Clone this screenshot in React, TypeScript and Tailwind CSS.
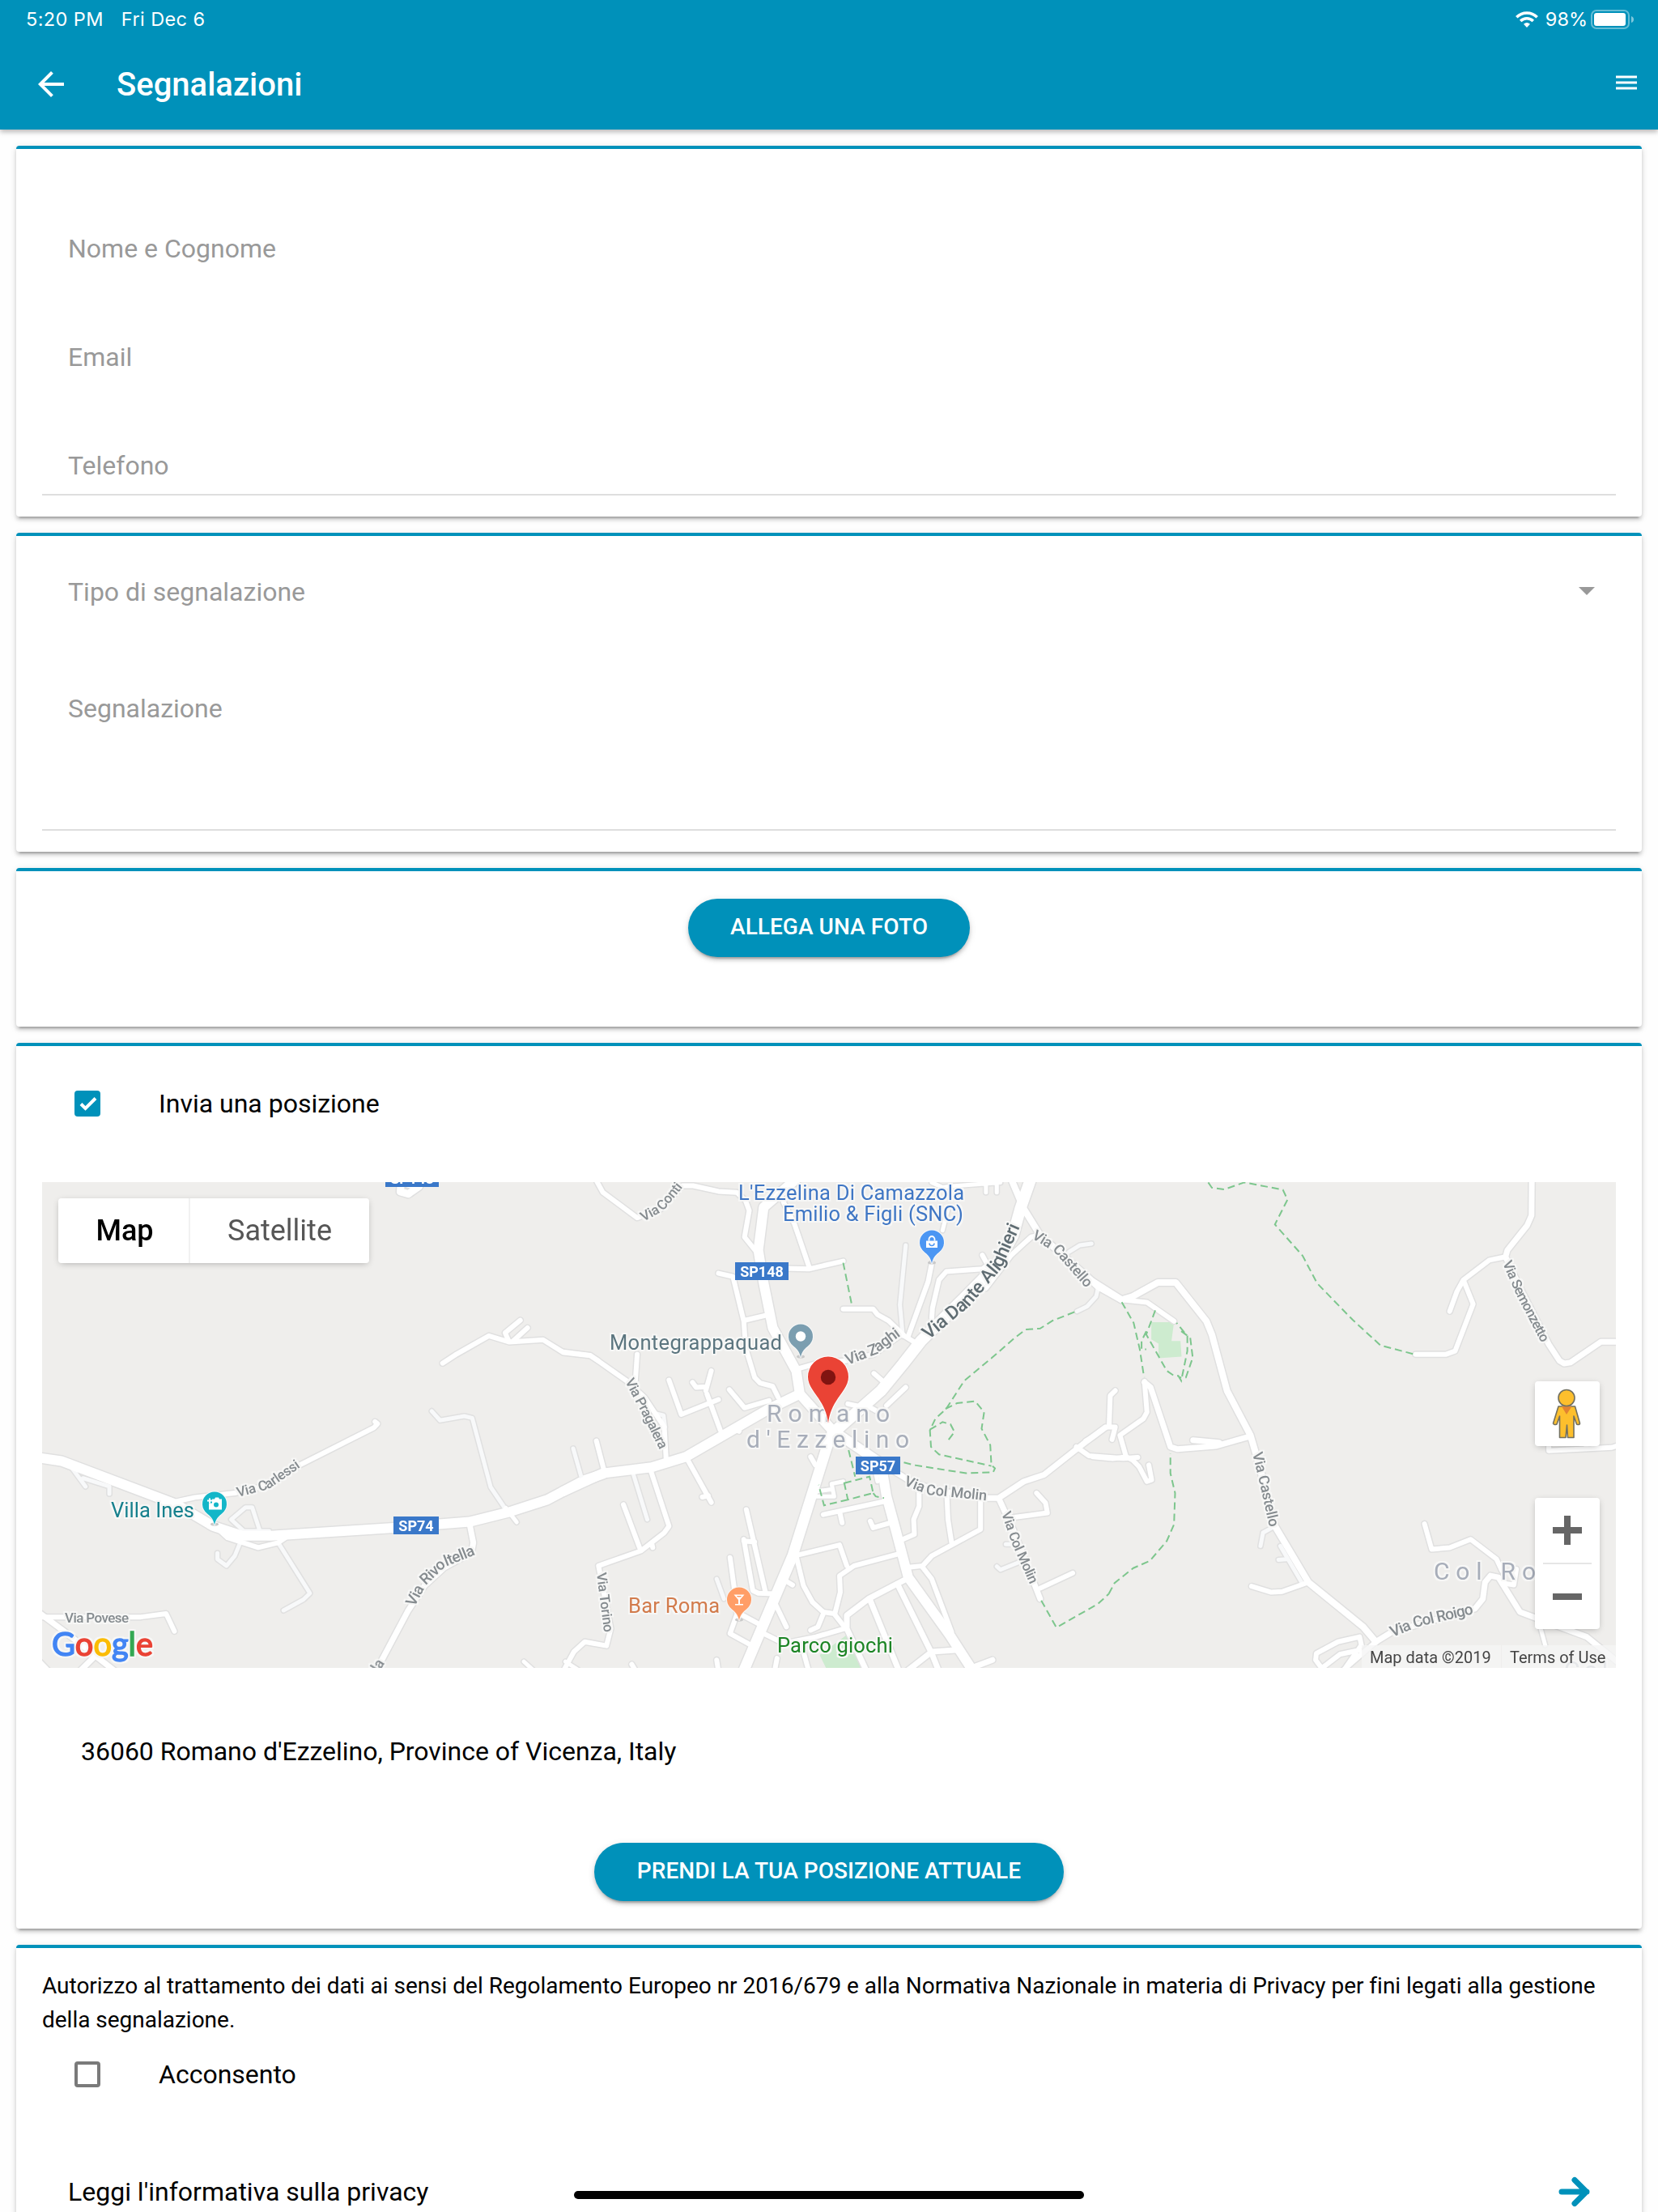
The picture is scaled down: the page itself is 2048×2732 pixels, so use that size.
import type { ReactNode } from "react";

type Road = { d: string; w: number; minor?: boolean };
type Tile = { transform: string; roads: Road[]; paths: string[]; parks: string[] };

// Each tile keeps its own coordinates, the transform puts it on the map canvas
const tiles: Tile[] = [
  {
    transform: "translate(-12 -20) scale(0.44643 0.40816)",
    parks: [],
    paths: [],
    roads: [
      { w: 5, minor: true, d: "M110 915L147 970M140 945L213 970L213 992" },
      { w: 5, minor: true, d: "M550 1070L590 1033L608 1033L628 1100M550 1070L585 1105L655 1105" },
      { w: 5, minor: true, d: "M575 1140L560 1180L537 1210L512 1190L512 1172" },
      { w: 5, minor: true, d: "M683 1145L768 1293L750 1312L695 1345" },
      { w: 5, minor: true, d: "M1105 742L1128 770L1195 757L1217 763L1268 972L1310 1040" },
      { w: 5, d: "M1310 1035L1340 1078" },
      { w: 6, d: "M400 1015L450 1003L560 990L655 965L740 905L945 792L955 780L948 774" },
      { w: 6, d: "M1135 597L1170 572L1263 514L1320 533L1413 526L1470 565L1543 574L1566 590" },
      { w: 6, d: "M1350 467L1308 505L1318 530M1370 490L1330 530" },
      { w: 6, d: "M520 1105L540 1125L625 1155L680 1140L700 1125" },
      { w: 7, d: "M1210 1085L1220 1140L1215 1170L1140 1215L1085 1270L1040 1345L950 1530" },
      { w: 6, d: "M30 1365L300 1365L370 1355L393 1408" },
      { w: 7, d: "M10 1345L90 1410L230 1530M10 1490L45 1530M130 1530L172 1485" },
      { w: 5, d: "M1360 1500L1390 1530M1475 1500L1510 1525" },
      { w: 9, d: "M1020 50L1018 78L1040 85L1070 62L1040 55" },
      { w: 12, d: "M0 880L80 893L400 1025L500 1090L580 1119L660 1119L1000 1095L1210 1077L1320 1047L1425 1010L1525 952L1580 932" },
    ],
  },
  {
    transform: "translate(648 -20) scale(0.44643 0.40816)",
    parks: ["M700 1480L780 1415L815 1525L720 1525Z"],
    paths: [
      "M765 293L790 427",
      "M1405 442L1345 468L1310 492L1270 495L1240 520L1175 582L1100 650L1050 735L1020 765L1005 800L1008 850L1030 873L1175 908",
      "M1048 735L1080 718L1130 712L1155 745L1148 795L1172 845L1175 905L1185 915L1180 927L1105 930L960 905L925 895L860 880",
      "M1005 798L1040 775L1062 782L1073 805L1050 838",
      "M780 860L798 940M768 960L838 940L848 990L778 1010ZM848 990L855 1000L878 1005M778 1010L712 1027L697 965",
      "M1313 1315L1355 1397L1470 1325L1500 1295",
    ],
    roads: [
      { w: 5, minor: true, d: "M185 935L223 1070M18 855L40 940M250 750L268 755L272 790M415 1250L435 1310" },
      { w: 5, minor: true, d: "M938 240L922 420L930 515M1390 260L1420 240L1452 235M1470 370L1465 395L1440 425L1412 440" },
      { w: 5, minor: true, d: "M1215 1145L1240 1145M1190 1212L1200 1222L1250 1200" },
      { w: 6, d: "M80 40L100 80L195 157L260 130L320 60L350 60L420 77L470 80L495 105L505 135L492 215L525 260" },
      { w: 6, d: "M-10 563L65 573L165 650L215 700L270 790L275 885M195 570L190 650M82 832L103 920" },
      { w: 6, d: "M-10 1530L20 1470L50 1440L110 1452L122 1400L88 1210L205 1165L270 1110L283 1090L232 920M157 1025L205 1165M236 1145L238 1155" },
      { w: 6, d: "M330 880L400 1018M375 1002L392 998" },
      { w: 6, d: "M283 648L317 752L420 707M425 800L388 690M400 620L385 680M348 655L358 670L385 668" },
      { w: 6, d: "M450 677L492 732L560 710M462 795L477 803" },
      { w: 6, d: "M420 325L460 335L490 470L495 550L520 640L535 657L570 667L585 700M490 468L560 450" },
      { w: 6, d: "M600 110L630 175L672 310M600 310L670 312L765 288" },
      { w: 6, d: "M765 433L848 433L860 450L890 468L935 515L965 535M945 515L1000 350L1010 295" },
      { w: 6, d: "M1010 460L1012 430L1030 345L1050 320L1150 312L1165 300L1150 270" },
      { w: 5, d: "M1010 50L1040 65L1060 62L1200 50M1160 55L1160 80M1190 55L1190 80M1040 195L1055 130" },
      { w: 6, d: "M1160 370L1230 270L1285 215L1310 210" },
      { w: 6, d: "M635 615L700 595L770 590L850 570L920 515" },
      { w: 6, d: "M850 628L878 655M938 670L885 725M830 725L855 740M778 720L820 730M675 880L688 905" },
      { w: 5, d: "M675 1000L740 1000L733 962L765 955M690 985L735 978M855 930L860 955" },
      { w: 6, d: "M710 1055L880 1015M755 1045L762 1080M840 1075L848 1095L895 1080" },
      { w: 6, d: "M975 970L975 1030L960 1070L962 1115L930 1130M1052 1000L1055 1070L1065 1140" },
      { w: 6, d: "M1145 1010L1145 1100L1010 1180L985 1210L940 1215M985 1215L1010 1250L1065 1410" },
      { w: 6, d: "M630 1180L755 1147L775 1210M915 1175L795 1210L755 1240L757 1290L742 1355" },
      { w: 6, d: "M635 1180L655 1270L680 1320L710 1350L740 1355L772 1400M710 1355L695 1395L675 1405" },
      { w: 7, d: "M940 1250L835 1310L775 1360L775 1400L830 1530M838 1310L920 1530" },
      { w: 7, d: "M915 1265L1010 1475L1030 1530M1010 1470L1075 1465M1010 1470L940 1530M1130 1515L1178 1495" },
      { w: 6, d: "M497 1040L550 1290M490 1130L515 1285L530 1293L575 1295M490 1135L520 1138M452 1185L465 1290" },
      { w: 6, d: "M605 1255L625 1268M575 1320L608 1395M470 1350L530 1385M470 1360L452 1415L510 1450" },
      { w: 6, d: "M545 1415L600 1445L690 1425L775 1398M655 1470L670 1530M582 1490L575 1530M415 1495L420 1530M180 1508L192 1530" },
      { w: 6, d: "M1300 990L1325 1020L1330 1050L1225 1065M1310 1278L1400 1232" },
      { w: 6, d: "M1410 850L1445 877L1540 885L1580 882" },
      { w: 7, d: "M870 900L960 960L1040 985L1165 1005L1195 1005L1265 955L1320 935L1440 832L1490 792M1195 1005L1235 1100L1310 1310" },
      { w: 8, d: "M1230 40L1265 130L1310 210L1440 335L1470 365L1535 405" },
      { w: 12, d: "M-10 985L50 955L100 930L235 912L330 880L425 820L560 735L645 690" },
      { w: 12, d: "M635 40L545 125L530 255L545 355L570 490L635 620L645 690L735 800" },
      { w: 14, d: "M1287 30L1255 130L1235 210L1190 300L1100 400L980 530L930 600L870 680L735 810" },
      { w: 13, d: "M735 810L720 850L625 1180L485 1540" },
      { w: 12, d: "M735 800L870 900L885 1000L910 1100L945 1245L1060 1420L1125 1530" },
    ],
  },
  {
    transform: "translate(1298 -20) scale(0.44516 0.40816)",
    parks: ["M162 473L225 473L218 530L243 530L246 577L182 582L182 538L162 525Z"],
    paths: [
      "M320 50L330 66L365 71L420 50L527 72L540 102L505 177L582 272L622 355L720 465L798 543L892 570",
      "M80 412L113 475L130 555L142 640",
      "M173 437L148 510L205 620L225 635L237 635L245 650L262 560L262 515L232 475",
      "M245 500L270 520L277 580L258 640L240 640",
      "M148 500L135 530L135 555L148 555",
      "M44 1295L60 1262L112 1217L158 1195L205 1135L225 1085L228 990L215 930L215 870",
    ],
    roads: [
      { w: 5, minor: true, d: "M472 1110L465 1150M505 1090L472 1110M515 1192L537 1190M520 1150L580 1262" },
      { w: 6, d: "M62 680L48 695L45 785M-20 832L0 820L35 790L62 790L53 828" },
      { w: 6, d: "M80 405L150 413L225 470" },
      { w: 6, d: "M0 880L55 886L92 880L110 890L128 910L150 955L163 950L155 905M92 880L75 815L140 765L150 745L143 652" },
      { w: 7, d: "M143 655L160 670L215 850L235 857L340 848L437 818M278 830L350 837" },
      { w: 6, d: "M440 1272L495 1290L525 1288L598 1260" },
      { w: 6, d: "M785 1440L690 1530M740 1465L685 1478L635 1520L618 1495L620 1475L680 1440L740 1425L745 1450L700 1520" },
      { w: 5, d: "M1240 1390L1255 1450M1365 840L1372 855" },
      { w: 6, d: "M920 1083L940 1160L990 1155L1048 1130L1120 1190L1135 1225M1175 1220L1168 1268L1135 1262" },
      { w: 6, d: "M1145 275L1100 285L1028 345L1010 380L990 440M1028 345L1055 418L1005 560L980 570L895 570" },
      { w: 6, d: "M1265 845L1265 862L1440 852L1470 842" },
      { w: 7, d: "M1218 30L1217 150L1205 180L1150 255L1145 275L1190 380L1265 540L1295 590L1308 598L1325 595L1410 532L1470 532" },
      { w: 7, d: "M785 1440L830 1410L1060 1340L1082 1310L1088 1260L1103 1240L1125 1245L1185 1350L1370 1425L1460 1505" },
      { w: 8, d: "M0 350L80 405L110 395L180 353L230 353L315 470L330 510L372 680L437 815L460 900L505 1090L598 1260L750 1395L785 1440" },
    ],
  },
];

const streets = [
  { id: "carlessi", text: "Via Carlessi", size: 17, len: 87, d: "M242 389L280 379L322 350" },
  { id: "rivoltella", text: "Via Rivoltella", size: 19, len: 104, d: "M460 525L474 498L498 475L538 459" },
  { id: "conti", text: "Via Conti", size: 17, len: 66, d: "M743 49L768 35L794 3" },
  { id: "castello-n", text: "Via Castello", size: 18, len: 93, d: "M1222 69L1250 86L1294 136" },
  { id: "zaghi", text: "Via Zaghi", size: 19, len: 76, d: "M995 226L1029 213L1064 187" },
  { id: "pragalera", text: "Via Pragalera", size: 17, len: 95, d: "M720 246L740 284L765 335" },
  { id: "torino", text: "Via Torino", size: 17, len: 74, d: "M685 483L695 562" },
  { id: "molin", text: "Via Col Molin", size: 18, len: 105, d: "M1064 374L1095 386L1174 394" },
  { id: "molin-s", text: "Via Col Molin", size: 17, len: 95, d: "M1185 409L1198 447L1224 505" },
  { id: "semonzetto", text: "Via Semonzetto", size: 17, len: 110, d: "M1804 100L1821 139L1856 206" },
  { id: "castello-s", text: "Via Castello", size: 18, len: 94, d: "M1495 335L1504 372L1518 435" },
  { id: "roigo", text: "Via Col Roigo", size: 19, len: 105, d: "M1668 562L1700 549L1773 532" },
];

const shields = [
  { text: "SP148", x: 424, y: -16, w: 66 },
  { text: "SP148", x: 856, y: 99, w: 66 },
  { text: "SP57", x: 1005, y: 339, w: 55 },
  { text: "SP74", x: 434, y: 413, w: 56 },
];

const Poi = ({ x, y, color, children }: { x: number; y: number; color: string; children: ReactNode }) => (
  <g transform={`translate(${x} ${y})`}>
    <ellipse cx="0" cy="25" rx="5" ry="2" fill="#c9c9c9" />
    <path
      d="M0 26C-1.500 18 -5 15.500 -9.500 11.500A15 15 0 1 1 9.500 11.500C5 15.500 1.500 18 0 26Z"
      fill={color}
      stroke="#f8f8f8"
      strokeWidth="2"
      paintOrder="stroke"
    />
    {children}
  </g>
);

const MapCanvas = () => (
  <svg viewBox="0 0 1944 600" className="block h-[600px] w-[1944px]" fontFamily="Roboto, sans-serif">
    <defs>
      <filter id="halo" filterUnits="userSpaceOnUse" x="0" y="0" width="1944" height="600" colorInterpolationFilters="sRGB">
        <feMorphology in="SourceAlpha" operator="dilate" radius="2" result="grown" />
        <feFlood floodColor="#f7f7f6" />
        <feComposite in2="grown" operator="in" />
        <feMerge>
          <feMergeNode />
          <feMergeNode in="SourceGraphic" />
        </feMerge>
      </filter>
    </defs>
    <rect width="1944" height="600" fill="#efeeec" />
    {tiles.map((t) => (
      <g key={t.transform} transform={t.transform}>
        {t.parks.map((d) => (
          <path key={d} d={d} fill="#cdebcf" />
        ))}
      </g>
    ))}
    <g fill="none" strokeLinecap="round" strokeLinejoin="round">
      {tiles.map((t) => (
        <g key={t.transform} transform={t.transform} stroke="#e0e0e0">
          {t.roads.map((r) => (
            <path key={r.d} d={r.d} strokeWidth={r.w + 3} vectorEffect="non-scaling-stroke" />
          ))}
        </g>
      ))}
      {tiles.map((t) => (
        <g key={t.transform} transform={t.transform}>
          {t.roads.map((r) => (
            <path
              key={r.d}
              d={r.d}
              stroke={r.minor ? "#f8f9fa" : "#ffffff"}
              strokeWidth={r.w}
              vectorEffect="non-scaling-stroke"
            />
          ))}
        </g>
      ))}
    </g>
    <g fill="none" stroke="#7dc68d" strokeWidth="2" strokeDasharray="9 5">
      {tiles.map((t) => (
        <g key={t.transform} transform={t.transform}>
          {t.paths.map((d) => (
            <path key={d} d={d} vectorEffect="non-scaling-stroke" />
          ))}
        </g>
      ))}
    </g>

    <g fill="#858b8f" filter="url(#halo)" fontWeight="500">
      {streets.map((s) => (
        <g key={s.id}>
          <path id={s.id} d={s.d} fill="none" />
          <text fontSize={s.size}>
            <textPath href={`#${s.id}`} textLength={s.len}>
              {s.text}
            </textPath>
          </text>
        </g>
      ))}
      <text x="28" y="544" fontSize="17" textLength="79">Via Povese</text>
      <text x="0" y="0" fontSize="18" transform="translate(416 606) rotate(-58)">la</text>
      <path id="dante" d="M1095 195L1146 153L1185 107L1212 46" fill="none" />
      <text fontSize="23" fill="#5f6c72">
        <textPath href="#dante" textLength="183">Via Dante Alighieri</textPath>
      </text>
    </g>

    {shields.map((s) => (
      <g key={`${s.x}-${s.y}`}>
        <rect x={s.x} y={s.y} width={s.w} height="22" fill="#3a78c9" />
        <text x={s.x + s.w / 2} y={s.y + 17.5} textAnchor="middle" fontSize="18" fontWeight="700" fill="#fff">
          {s.text}
        </text>
      </g>
    ))}

    <g filter="url(#halo)" fontSize="25.500">
      <text x="85" y="413.500" fill="#16808d" textLength="103">Villa Ines</text>
      <text x="860" y="22" fill="#3f76c4" textLength="279">L'Ezzelina Di Camazzola</text>
      <text x="915" y="48" fill="#3f76c4" textLength="223">Emilio &amp; Figli (SNC)</text>
      <text x="701" y="207" fill="#5b757f" textLength="213">Montegrappaquad</text>
      <text x="724" y="532" fill="#d27b4c" textLength="113">Bar Roma</text>
      <text x="908" y="581" fill="#1b8424" textLength="143">Parco giochi</text>
      <g fontSize="30" fill="#a7adb9">
        <text x="895" y="295.500" textLength="152">Romano</text>
        <text x="870" y="328" textLength="201">d'Ezzelino</text>
        <text x="1719" y="491" textLength="126">Col Ro</text>
        <text x="1880" y="613" letterSpacing="5">Col</text>
      </g>
    </g>

    <Poi x={213} y={397.5} color="#14b6c8">
      <path d="M-1 -6H0L1 -8H5L6 -6H9V7H-7V-1H-3V-6Z" fill="#fff" />
      <circle cx="2" cy="1" r="3" fill="#14b6c8" />
      <path d="M-6 -7V-1M-9 -4H-3" stroke="#fff" strokeWidth="2" />
    </Poi>
    <Poi x={1099} y={74.5} color="#4b96f3">
      <path d="M-7 -2H7V6.500H-7Z" fill="#fff" />
      <path d="M-3.500 -2V-4A3.500 3.500 0 0 1 3.500 -4V-2" fill="none" stroke="#fff" strokeWidth="1.800" />
      <path d="M-3 1A3 3 0 0 0 3 1" fill="none" stroke="#4b96f3" strokeWidth="1.500" />
    </Poi>
    <Poi x={937} y={190.5} color="#7b9eb0">
      <circle r="6.200" fill="#fff" />
    </Poi>
    <Poi x={861} y={515.5} color="#ff9e67">
      <path d="M-6.500 -6H6.500L1 0.500V5.500H5V7H-5V5.500H-1V0.500ZM-3.200 -4.500L-1.800 -3H1.800L3.200 -4.500Z" fill="#fff" fillRule="evenodd" />
    </Poi>

    <path
      d="M971 298C969.500 285 965 276 959 267C952 257 946 250 946 240.500A25 25 0 0 1 996 240.500C996 250 990 257 983 267C977 276 972.500 285 971 298Z"
      fill="#ea4335"
      stroke="#fff"
      strokeWidth="2"
      paintOrder="stroke"
    />
    <circle cx="971" cy="241" r="9.200" fill="#811411" />

    <g fontFamily="Lato, sans-serif" fontSize="41" filter="url(#halo)" strokeWidth="1.500">
      <text x="12" y="585" textLength="125" lengthAdjust="spacingAndGlyphs">
        <tspan fill="#4285f4" stroke="#4285f4">G</tspan>
        <tspan fill="#ea4335" stroke="#ea4335">o</tspan>
        <tspan fill="#fbbc05" stroke="#fbbc05">o</tspan>
        <tspan fill="#4285f4" stroke="#4285f4">g</tspan>
        <tspan fill="#34a853" stroke="#34a853">l</tspan>
        <tspan fill="#ea4335" stroke="#ea4335">e</tspan>
      </text>
    </g>
  </svg>
);

const controlShadow = "shadow-[0_2px_8px_-2px_rgba(0,0,0,0.3)]";

const LocationMap = () => (
  <div className="relative h-[600px] w-[1944px] overflow-hidden">
    <MapCanvas />
    <div className={`absolute left-5 top-5 flex h-20 rounded bg-white text-4xl ${controlShadow}`}>
      <div className="flex w-[163px] items-center justify-center border-r-2 border-[#f1f1f1] pl-[3px] font-medium text-black">
        Map
      </div>
      <div className="flex w-[221px] items-center justify-center text-[#565656]">Satellite</div>
    </div>

    <div className={`absolute right-5 top-[246px] h-20 w-20 rounded bg-white ${controlShadow}`}>
      <svg viewBox="0 0 80 80" className="h-20 w-20">
        <path
          d="M29 31H49.500L55.500 52Q55 54.500 51.500 53L48 43V69.500H40.500L39.500 54L38 69.500H30.500V43L27 53Q23.500 54.500 22.500 52Z"
          fill="#fdbf2d"
          stroke="#73705f"
          strokeWidth="1.600"
          strokeLinejoin="round"
        />
        <path d="M33 31H45.500L39 41Z" fill="#e28332" />
        <circle cx="39" cy="20.500" r="10" fill="#fdbf2d" stroke="#73705f" strokeWidth="1.600" />
      </svg>
    </div>

    <div className={`absolute right-5 top-[390px] flex h-[162px] w-20 flex-col items-center rounded bg-white ${controlShadow}`}>
      <svg viewBox="0 0 80 80" className="h-20 w-20">
        <path d="M22 40H58M40 22V58" stroke="#666" strokeWidth="8" />
      </svg>
      <div className="h-[2px] w-[60px] bg-[#e6e6e6]" />
      <svg viewBox="0 0 80 80" className="h-20 w-20">
        <path d="M22 40H58" stroke="#666" strokeWidth="8" />
      </svg>
    </div>

    <div className="absolute bottom-0 right-0 flex h-7 gap-px text-[20px] leading-[30px] text-[#444]">
      <div className="w-[172px] whitespace-nowrap bg-[#f5f5f5]/80 pl-[10px]">Map data ©2019</div>
      <div className="w-[141px] whitespace-nowrap bg-[#f5f5f5]/80 pl-[10px]">Terms of Use</div>
    </div>
  </div>
);

const Card = ({ className, children }: { className: string; children: ReactNode }) => (
  <section
    className={`rounded border-t-4 border-[#0091ba] bg-white px-8 shadow-[0_4px_4px_0_rgba(0,0,0,0.14),0_6px_2px_-4px_rgba(0,0,0,0.2),0_2px_10px_0_rgba(0,0,0,0.12)] ${className}`}
  >
    {children}
  </section>
);

const PillButton = ({ className, children }: { className: string; children: ReactNode }) => (
  <button
    className={`block h-[72px] rounded-full bg-[#0091ba] pb-[3px] text-[28px] font-medium tracking-[0.05px] text-white shadow-[0_4px_4px_0_rgba(0,0,0,0.14),0_6px_2px_-4px_rgba(0,0,0,0.2),0_2px_10px_0_rgba(0,0,0,0.12)] ${className}`}
  >
    {children}
  </button>
);

const Header = () => (
  <header className="relative h-[160px] bg-[#0091ba] text-white shadow-[0_3px_6px_rgba(0,0,0,0.28)]">
    <div className="flex h-12 items-center justify-between pl-8 pr-[30px] font-['Inter'] text-[23.5px]">
      <div className="flex gap-[22px] tracking-[0.4px]">
        <span>5:20 PM</span>
        <span>Fri Dec 6</span>
      </div>
      <div className="flex items-center">
        <svg viewBox="0 0 28 20" className="mr-[9px] h-5 w-7" fill="none" stroke="#fff" strokeWidth="3.600">
          <path d="M1.300 7.300C8.500 0.200 19.500 0.200 26.700 7.300" />
          <path d="M6.200 12C10.700 7.700 17.300 7.700 21.800 12" />
          <path d="M10 15.800Q14 12.400 18 15.800L14 20Z" fill="#fff" stroke="none" />
        </svg>
        <span className="mr-1">98%</span>
        <svg viewBox="0 0 53 24" className="h-6 w-[53px]">
          <rect x="1" y="1" width="46" height="22" rx="6" fill="none" stroke="#fff" strokeOpacity="0.4" strokeWidth="2" />
          <rect x="4" y="4" width="39" height="16" rx="3" fill="#fff" />
          <path d="M50 8Q53 9 53 12T50 16Z" fill="#fff" fillOpacity="0.5" />
        </svg>
      </div>
    </div>
    <div className="flex h-28 items-center pl-[39px] pr-[26px]">
      <svg viewBox="0 0 24 24" className="h-12 w-12" fill="#fff">
        <path d="M20 11H7.830l5.590-5.590L12 4l-8 8 8 8 1.410-1.410L7.830 13H20z" />
      </svg>
      <h1 className="ml-[57px] pt-[2px] text-[40px] font-medium">Segnalazioni</h1>
      <svg viewBox="0 0 26 18" className="ml-auto h-[18px] w-[26px] -translate-y-[2px]">
        <path d="M0 2H26M0 9H26M0 16H26" stroke="#fff" strokeWidth="3" />
      </svg>
    </div>
  </header>
);

const App = () => (
  <div className="relative h-[2732px] w-[2048px] overflow-hidden bg-[#fefefe] font-['Roboto',sans-serif] text-[32px] leading-10 text-black">
    <Header />

    <main className="flex flex-col gap-5 p-5">
      <Card className="h-[458px] pt-[26px] text-[#999]">
        <div className="flex h-[134px] items-end pb-[17px] pl-8">Nome e Cognome</div>
        <div className="flex h-[134px] items-end pb-[17px] pl-8">Email</div>
        <div className="flex h-[134px] items-end border-b-2 border-[#dedede] pb-[15px] pl-8">Telefono</div>
      </Card>

      <Card className="h-[394px] text-[#999]">
        <div className="flex h-[138px] items-center justify-between pl-8 pr-[26px]">
          <span>Tipo di segnalazione</span>
          <svg viewBox="0 0 20 10" className="h-[10px] w-5 -translate-y-px">
            <path d="M0 0H20L10 10Z" fill="#999" />
          </svg>
        </div>
        <div className="h-[226px] border-b-2 border-[#dedede] pl-8 pt-[55px]">Segnalazione</div>
      </Card>

      <Card className="h-[196px] pt-[34px]">
        <PillButton className="mx-auto w-[348px]">ALLEGA UNA FOTO</PillButton>
      </Card>

      <Card className="h-[1094px]">
        <div className="flex h-[142px] items-center gap-[72px] pl-10">
          <svg viewBox="0 0 32 32" className="h-8 w-8">
            <rect width="32" height="32" rx="4" fill="#0091ba" />
            <path d="M8 16.500L13.500 22L26 9.500" fill="none" stroke="#fff" strokeWidth="4" />
          </svg>
          <span>Invia una posizione</span>
        </div>
        <div className="mt-[26px]">
          <LocationMap />
        </div>
        <div className="flex h-[206px] items-center pl-12 tracking-[-0.02px]">
          36060 Romano d'Ezzelino, Province of Vicenza, Italy
        </div>
        <PillButton className="mx-auto mt-[10px] w-[580px]">PRENDI LA TUA POSIZIONE ATTUALE</PillButton>
      </Card>

      <Card className="h-[420px] pt-[26px]">
        <p className="text-[28px] leading-[42px] tracking-[-0.015px]">
          Autorizzo al trattamento dei dati ai sensi del Regolamento Europeo nr 2016/679 e alla Normativa Nazionale in
          materia di Privacy per fini legati alla gestione della segnalazione.
        </p>
        <div className="flex h-[91px] items-center gap-[72px] pl-10">
          <div className="h-8 w-8 rounded border-4 border-[#7a7a7a]" />
          <span>Acconsento</span>
        </div>
        <div className="flex h-[200px] items-center justify-between pl-8 pr-8">
          <span>Leggi l'informativa sulla privacy</span>
          <svg viewBox="0 0 40 38" className="h-[38px] w-10" fill="none" stroke="#0091ba" strokeWidth="7" strokeLinecap="round" strokeLinejoin="round">
            <path d="M5 19H36M21 4.500L35.500 19L21 33.500" />
          </svg>
        </div>
      </Card>
    </main>

    {/* home indicator */}
    <div className="absolute bottom-4 left-[709px] h-[10px] w-[630px] rounded-full bg-black" />
  </div>
);

export default App;
